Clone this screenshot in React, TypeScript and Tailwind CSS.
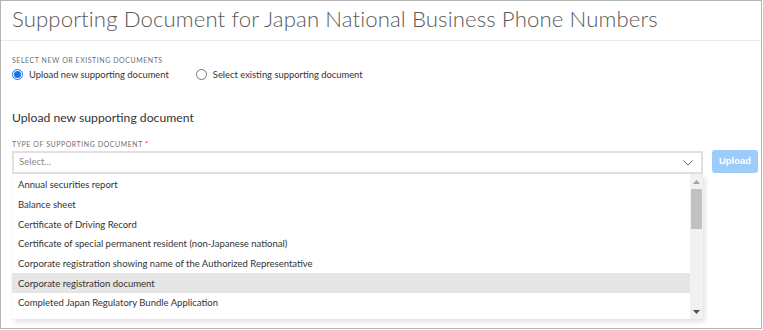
import React from "react";

const items = [
  "Annual securities report",
  "Balance sheet",
  "Certificate of Driving Record",
  "Certificate of special permanent resident (non-Japanese national)",
  "Corporate registration showing name of the Authorized Representative",
  "Corporate registration document",
  "Completed Japan Regulatory Bundle Application",
];

export default function App() {
  return (
    <div className="w-[763px] h-[330px] bg-white" style={{ fontFamily: "Lato, 'Open Sans', sans-serif" }}>
      <div className="w-[762px] h-[329px] border border-[#b4b4b4] bg-white overflow-hidden">
        <div className="h-[40px] border-b border-[#ebebeb] pl-[11px] flex items-center">
          <h1 className="text-[22.2px] font-light text-[#5a5a5a] leading-none tracking-[0.1px] -mt-[2px]">
            Supporting Document for Japan National Business Phone Numbers
          </h1>
        </div>
        <div className="pl-[11px] pr-[3px] pt-[14px]">
          <div className="text-[7px] uppercase tracking-[0.55px] text-[#707070] leading-[10px]">
            Select new or existing documents
          </div>
          <div className="flex items-center h-[16px] mt-[2px] text-[9.4px] text-[#333]">
            <div className="flex items-center">
              <span className="w-[11px] h-[11px] rounded-full border border-[#1a73e8] flex items-center justify-center">
                <span className="w-[7px] h-[7px] rounded-full bg-[#1a73e8]" />
              </span>
              <span className="ml-[6px]">Upload new supporting document</span>
            </div>
            <div className="flex items-center ml-[27px]">
              <span className="w-[11px] h-[11px] rounded-full border border-[#767676]" />
              <span className="ml-[6px]">Select existing supporting document</span>
            </div>
          </div>
          <div className="mt-[27px] text-[12.2px] text-[#333] leading-[16px]">Upload new supporting document</div>
          <div className="mt-[13px] text-[7px] uppercase tracking-[0.55px] text-[#707070] leading-[10px]">
            Type of supporting document <span className="text-[#e0291c]">*</span>
          </div>
          <div className="mt-[2px] flex items-start">
            <div className="relative w-[692px]">
              <div className="h-[23px] border-2 border-[#e0e0e0] flex items-center pl-[5px] pr-[8px] text-[9.5px] text-[#8a8a8a]">
                <span className="flex-1">Select...</span>
                <svg width="10" height="6" viewBox="0 0 10 6">
                  <path d="M0.5 0.5 L5 5 L9.5 0.5" fill="none" stroke="#666" strokeWidth="1" />
                </svg>
              </div>
              <div className="absolute left-0 top-[23px] w-[691px] h-[145px] bg-white shadow-[2px_3px_5px_rgba(0,0,0,0.12)] flex">
                <div className="flex-1 pt-[1px]">
                  {items.map((t, i) => (
                    <div
                      key={t}
                      className={`h-[19.7px] flex items-center pl-[6px] pt-[1px] text-[9.5px] text-[#333] ${i === 5 ? "bg-[#e5e5e5]" : ""}`}
                    >
                      {t}
                    </div>
                  ))}
                </div>
                <div className="w-[13px] bg-[#f1f1f1] flex flex-col items-center">
                  <div className="h-[15px] flex items-center justify-center">
                    <svg width="7" height="4" viewBox="0 0 7 4">
                      <path d="M0 4 L3.5 0 L7 4 Z" fill="#a3a3a3" />
                    </svg>
                  </div>
                  <div className="w-[11px] h-[40px] bg-[#c1c1c1]" />
                  <div className="flex-1" />
                  <div className="h-[15px] flex items-center justify-center">
                    <svg width="7" height="4" viewBox="0 0 7 4">
                      <path d="M0 0 L7 0 L3.5 4 Z" fill="#505050" />
                    </svg>
                  </div>
                </div>
              </div>
            </div>
            <button className="ml-[9px] -mt-[1px] w-[46px] h-[23px] rounded-[3px] bg-[#9dcbfa] text-white text-[9.5px] font-bold" style={{ fontFamily: "'Liberation Sans', Arial, sans-serif" }}>
              Upload
            </button>
          </div>
        </div>
      </div>
    </div>
  );
}
